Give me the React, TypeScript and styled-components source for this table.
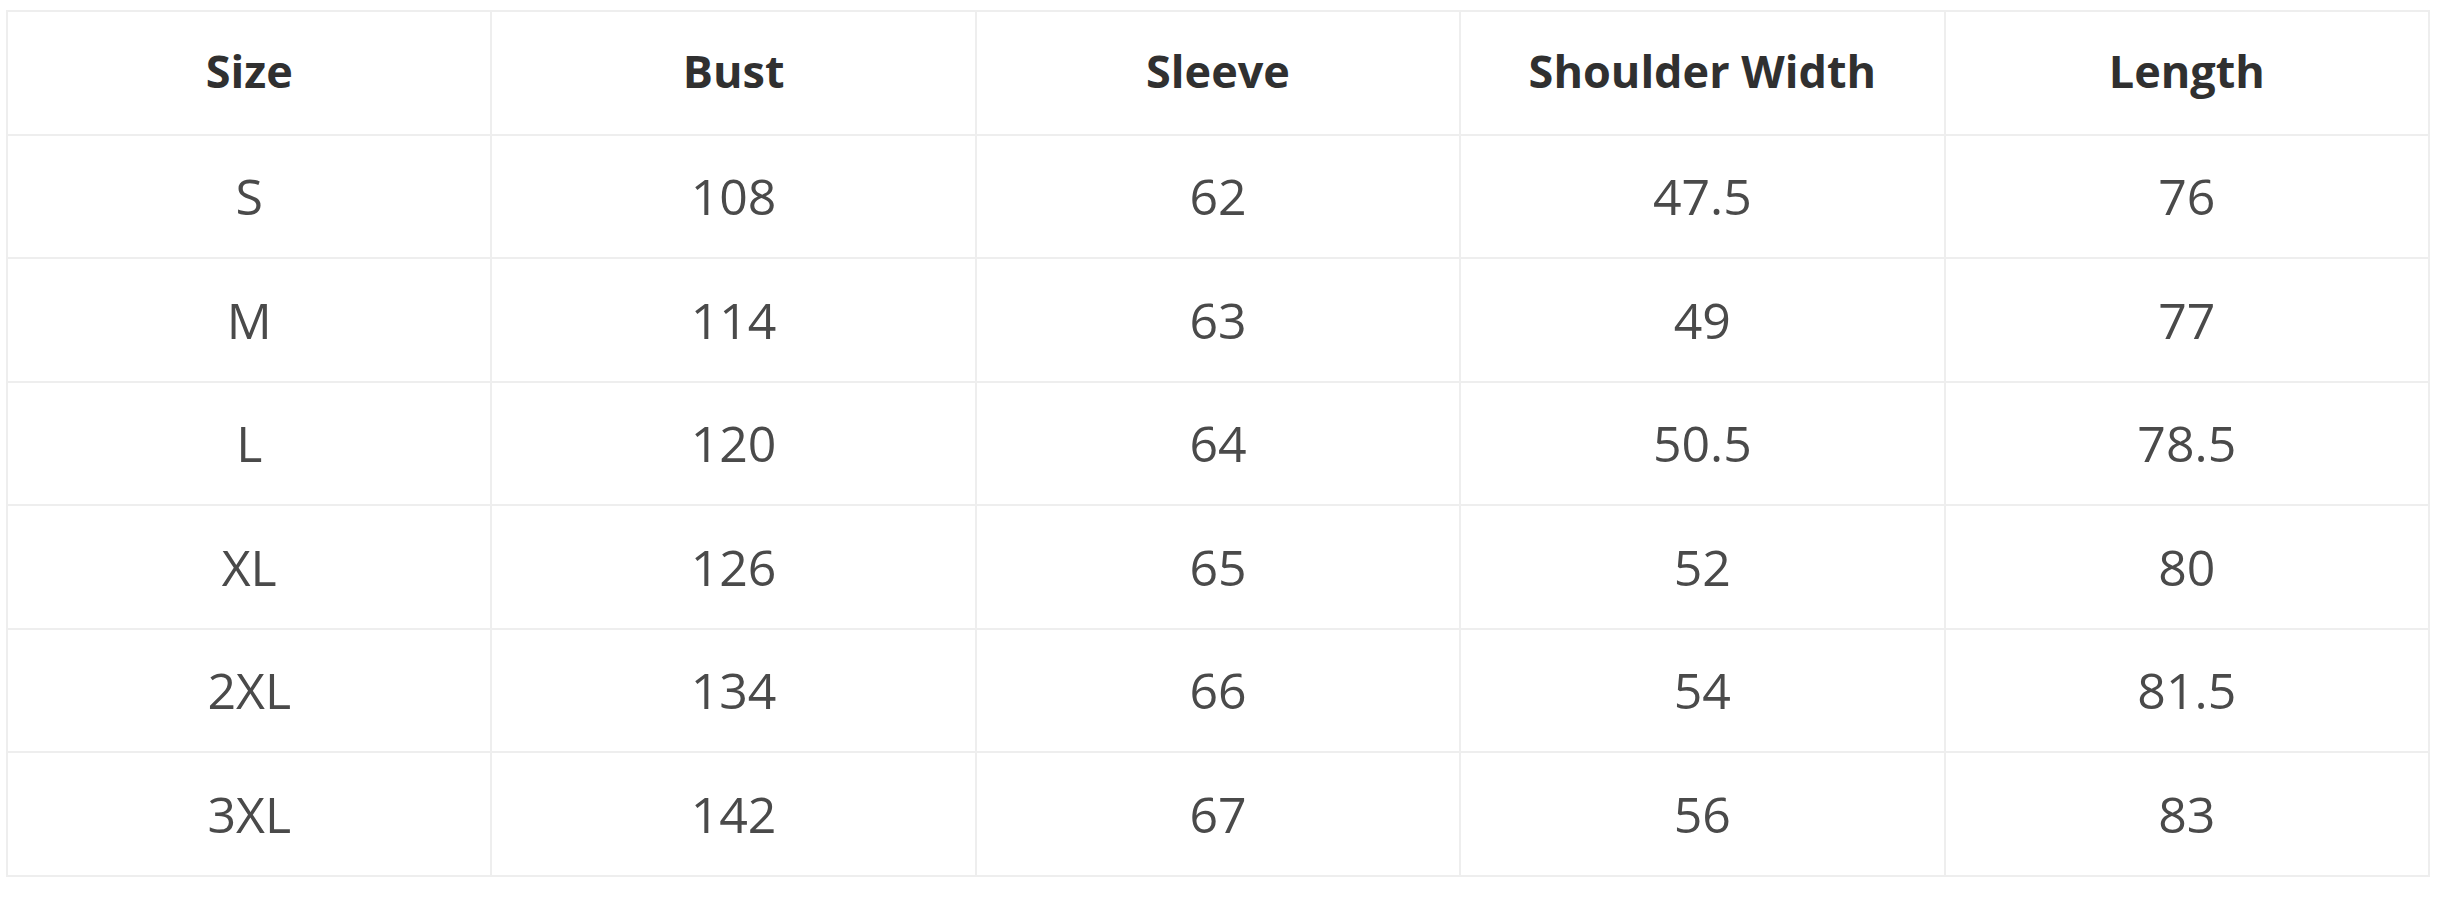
import styled, { createGlobalStyle } from "styled-components"

const GlobalStyle = createGlobalStyle`
  html, body {
    margin: 0;
    padding: 0;
    background: #ffffff;
  }
`

const Page = styled.div`
  padding: 10px 0 0 6px;
  background: #ffffff;
`

const SizeTable = styled.table`
  width: 2424px;
  border-collapse: collapse;
  table-layout: fixed;
  font-family: "Open Sans", "Noto Sans", sans-serif;
`

const Row = styled.tr`
  height: 123.5px;
`

const HeadCell = styled.th`
  border: 2px solid #eeeeee;
  text-align: center;
  vertical-align: middle;
  font-size: 45px;
  font-weight: 700;
  color: #303030;
  padding: 0 0 5px;
`

const Cell = styled.td`
  border: 2px solid #eeeeee;
  text-align: center;
  vertical-align: middle;
  font-size: 50px;
  font-weight: 400;
  color: #4a4a4a;
  padding: 0;
`

const headers = ["Size", "Bust", "Sleeve", "Shoulder Width", "Length"]

const rows = [
  ["S", "108", "62", "47.5", "76"],
  ["M", "114", "63", "49", "77"],
  ["L", "120", "64", "50.5", "78.5"],
  ["XL", "126", "65", "52", "80"],
  ["2XL", "134", "66", "54", "81.5"],
  ["3XL", "142", "67", "56", "83"],
]

export default function App() {
  return (
    <>
      <GlobalStyle />
      <Page>
        <SizeTable>
          <thead>
            <Row>
              {headers.map((h) => (
                <HeadCell key={h}>{h}</HeadCell>
              ))}
            </Row>
          </thead>
          <tbody>
            {rows.map((r) => (
              <Row key={r[0]}>
                {r.map((v, i) => (
                  <Cell key={i}>{v}</Cell>
                ))}
              </Row>
            ))}
          </tbody>
        </SizeTable>
      </Page>
    </>
  )
}
